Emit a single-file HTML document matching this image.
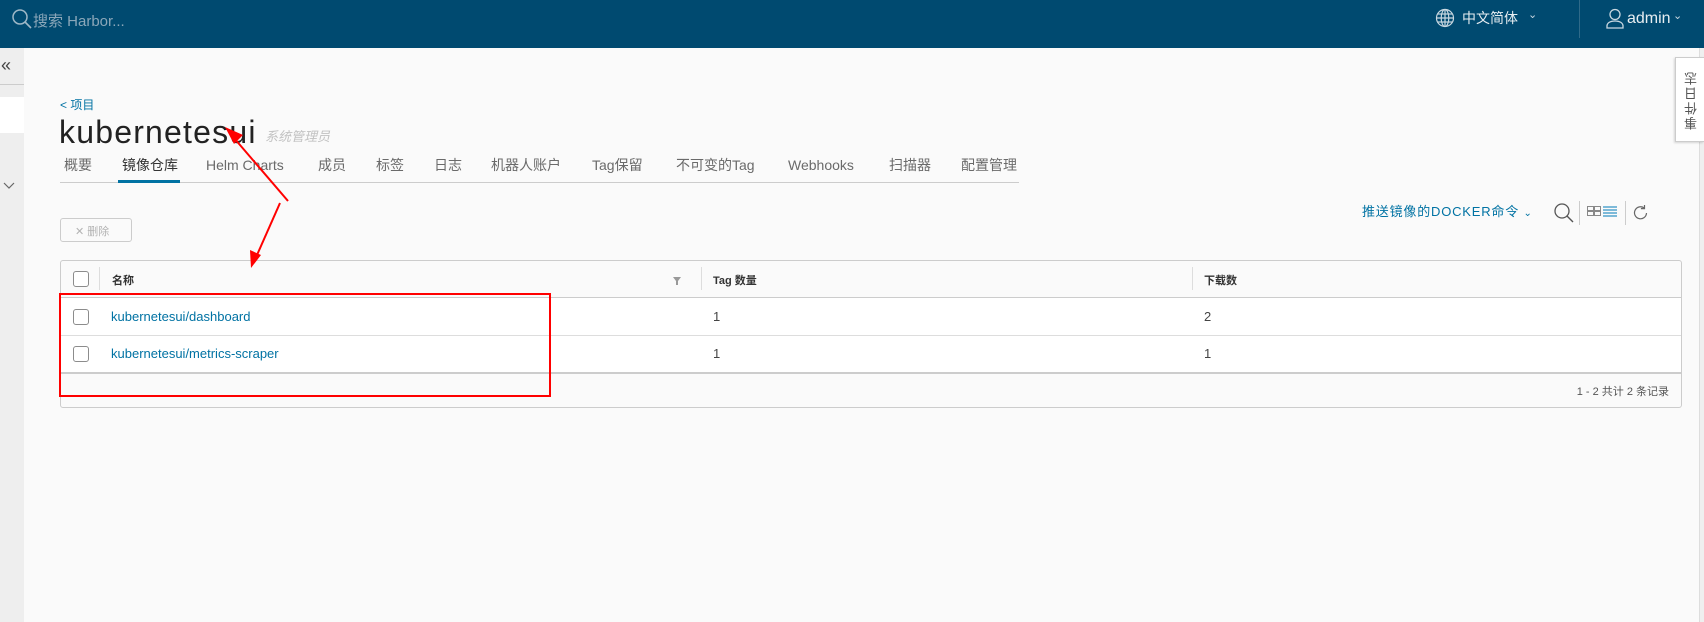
<!DOCTYPE html>
<html><head><meta charset="utf-8"><style>
*{box-sizing:border-box;margin:0;padding:0}
body{width:1704px;height:622px;overflow:hidden;background:#fafafa;font-family:"Liberation Sans","Noto Sans CJK SC",sans-serif;position:relative;color:#565656}
.a{position:absolute;white-space:nowrap}
.hdr{position:absolute;left:0;top:0;width:1704px;height:48px;background:#004a70}
.side{position:absolute;left:0;top:48px;width:24px;height:574px;background:#eeeeee}
.tab{position:absolute;top:156px;font-size:14px;line-height:18px;height:18px;color:#6a6a6a}
.cb{position:absolute;width:16px;height:16px;border:1px solid #8c8c8c;border-radius:3px;background:#fff}
.lnk{color:#0072a3;font-size:13px}
</style></head><body>
<div class="hdr"></div>
<svg class="a" style="left:11px;top:8px" width="22" height="22" viewBox="0 0 22 22"><circle cx="9" cy="9" r="7" fill="none" stroke="#9fb8c7" stroke-width="1.5"/><line x1="14" y1="14" x2="20" y2="20" stroke="#9fb8c7" stroke-width="1.6"/></svg>
<div class="a" style="left:33px;top:10px;font-size:15px;color:#8ba7b9">搜索 Harbor...</div>
<svg class="a" style="left:1435px;top:8px" width="20" height="20" viewBox="0 0 20 20" fill="none" stroke="#c9d8e1" stroke-width="1.2"><circle cx="10" cy="10" r="8.5"/><ellipse cx="10" cy="10" rx="3.8" ry="8.5"/><line x1="1.5" y1="10" x2="18.5" y2="10"/><line x1="3" y1="6" x2="17" y2="6"/><line x1="3" y1="14" x2="17" y2="14"/><line x1="10" y1="1.5" x2="10" y2="18.5"/></svg>
<div class="a" style="left:1462px;top:8px;font-size:14px;line-height:20px;color:#e6edf1">中文简体</div>
<div class="a" style="left:1528px;top:8px;font-size:11px;color:#c9d8e1">⌄</div>
<div class="a" style="left:1579px;top:0;width:1px;height:38px;background:#2f6a89"></div>
<svg class="a" style="left:1606px;top:8px" width="18" height="22" viewBox="0 0 18 22" fill="none" stroke="#c9d8e1" stroke-width="1.3"><circle cx="9" cy="6.5" r="5"/><path d="M1 20v-2c0-3 3-5 8-5s8 2 8 5v2z"/></svg>
<div class="a" style="left:1627px;top:9px;font-size:16px;line-height:20px;color:#e6edf1">admin</div>
<div class="a" style="left:1673px;top:9px;font-size:11px;color:#c9d8e1">⌄</div>

<div class="side"></div>
<div class="a" style="left:1px;top:55px;font-size:18px;color:#444">«</div>
<div class="a" style="left:0;top:84px;width:24px;height:1px;background:#ccc"></div>
<div class="a" style="left:0;top:97px;width:24px;height:36px;background:#fff"></div>
<svg class="a" style="left:3px;top:182px" width="12" height="8" viewBox="0 0 12 8"><path d="M1 1l5 5 5-5" fill="none" stroke="#666" stroke-width="1.2"/></svg>

<div class="a" style="left:1699px;top:48px;width:5px;height:574px;background:#efefef;border-left:1px solid #ddd"></div>
<div class="a" style="left:1675px;top:57px;width:29px;height:85px;background:#fff;border:1px solid #ccc;border-right:none;box-shadow:-1px 1px 2px rgba(0,0,0,.15)"></div>
<div class="a" style="left:1682px;top:70px;font-size:13px;color:#555;writing-mode:vertical-rl;transform:rotate(180deg);letter-spacing:2px">事件日志</div>

<div class="a lnk" style="left:60px;top:98px;font-size:12px;line-height:14px">&lt; 项目</div>
<div class="a" style="left:59px;top:115px;font-size:32px;line-height:34px;color:#222;letter-spacing:1.2px">kubernetesui</div>
<div class="a" style="left:265px;top:126px;font-size:13px;color:#c2c2c2;font-style:italic">系统管理员</div>

<div class="tab" style="left:64px">概要</div>
<div class="tab" style="left:122px;color:#333">镜像仓库</div>
<div class="tab" style="left:206px">Helm Charts</div>
<div class="tab" style="left:318px">成员</div>
<div class="tab" style="left:376px">标签</div>
<div class="tab" style="left:434px">日志</div>
<div class="tab" style="left:491px">机器人账户</div>
<div class="tab" style="left:592px">Tag保留</div>
<div class="tab" style="left:676px">不可变的Tag</div>
<div class="tab" style="left:788px">Webhooks</div>
<div class="tab" style="left:889px">扫描器</div>
<div class="tab" style="left:961px">配置管理</div>
<div class="a" style="left:60px;top:182px;width:959px;height:1px;background:#ccc"></div>
<div class="a" style="left:118px;top:180px;width:62px;height:3px;background:#0072a3"></div>

<div class="a" style="left:1362px;top:203px;font-size:13px;line-height:18px;color:#0072a3;letter-spacing:0.8px">推送镜像的DOCKER命令 <span style="font-size:10px">⌄</span></div>
<svg class="a" style="left:1553px;top:202px" width="22" height="22" viewBox="0 0 22 22"><circle cx="9" cy="9" r="7" fill="none" stroke="#555" stroke-width="1.3"/><line x1="14" y1="14" x2="20" y2="20" stroke="#555" stroke-width="1.4"/></svg>
<div class="a" style="left:1579px;top:201px;width:1px;height:24px;background:#ccc"></div>
<svg class="a" style="left:1587px;top:205px" width="32" height="12" viewBox="0 0 32 12" fill="none" stroke-width="1"><rect x="0.5" y="1.5" width="6" height="4" stroke="#888"/><rect x="7.5" y="1.5" width="6" height="4" stroke="#888"/><rect x="0.5" y="6.5" width="6" height="4" stroke="#888"/><rect x="7.5" y="6.5" width="6" height="4" stroke="#888"/><path d="M16 2h14M16 5h14M16 8h14M16 11h14" stroke="#0079b8"/></svg>
<div class="a" style="left:1625px;top:201px;width:1px;height:24px;background:#ccc"></div>
<svg class="a" style="left:1632px;top:204px" width="18" height="18" viewBox="0 0 18 18" fill="none" stroke="#666" stroke-width="1.2"><path d="M14.5 9A6 6 0 1 1 12.5 4.3"/><path d="M12.5 1v3.6h-3.6"/></svg>

<div class="a" style="left:60px;top:218px;width:72px;height:24px;border:1px solid #ccc;border-radius:3px;font-size:11px;color:#b3b3b3;padding:4px 0 0 14px">✕ 删除</div>

<div class="a" style="left:60px;top:260px;width:1622px;height:148px;border:1px solid #ccc;border-radius:3px;background:#fafafa"></div>
<div class="a" style="left:61px;top:297px;width:1620px;height:76px;background:#fff;border-top:1px solid #ccc;border-bottom:1px solid #ccc"></div>
<div class="a" style="left:61px;top:335px;width:1620px;height:1px;background:#ddd"></div>
<div class="a" style="left:61px;top:372px;width:1620px;height:2px;background:#ccc"></div>
<div class="a" style="left:99px;top:267px;width:1px;height:23px;background:#ddd"></div>
<div class="a" style="left:701px;top:267px;width:1px;height:23px;background:#ddd"></div>
<div class="a" style="left:1192px;top:267px;width:1px;height:23px;background:#ddd"></div>
<div class="cb" style="left:73px;top:271px"></div>
<div class="cb" style="left:73px;top:309px"></div>
<div class="cb" style="left:73px;top:346px"></div>
<div class="a" style="left:112px;top:272px;font-size:11px;color:#333;font-weight:bold">名称</div>
<svg class="a" style="left:672px;top:276px" width="10" height="10" viewBox="0 0 10 10"><path d="M1 1h8L6 5v4H4V5z" fill="#999"/></svg>
<div class="a" style="left:713px;top:272px;font-size:11px;color:#333;font-weight:bold">Tag 数量</div>
<div class="a" style="left:1204px;top:272px;font-size:11px;color:#333;font-weight:bold">下载数</div>
<div class="a lnk" style="left:111px;top:309px">kubernetesui/dashboard</div>
<div class="a lnk" style="left:111px;top:346px">kubernetesui/metrics-scraper</div>
<div class="a" style="left:713px;top:309px;font-size:13px;color:#444">1</div>
<div class="a" style="left:713px;top:346px;font-size:13px;color:#444">1</div>
<div class="a" style="left:1204px;top:309px;font-size:13px;color:#444">2</div>
<div class="a" style="left:1204px;top:346px;font-size:13px;color:#444">1</div>
<div class="a" style="left:1560px;top:383px;width:109px;text-align:right;font-size:11px;color:#555">1 - 2 共计 2 条记录</div>

<div class="a" style="left:59px;top:293px;width:492px;height:104px;border:2px solid #f00"></div>
<svg class="a" style="left:0;top:0" width="600" height="300" viewBox="0 0 600 300">
<line x1="288" y1="201" x2="234" y2="138" stroke="#f00" stroke-width="2"/>
<path d="M225 127l18 8-9 9z" fill="#f00"/>
<line x1="280" y1="203" x2="257" y2="255" stroke="#f00" stroke-width="2"/>
<path d="M251 268l-1-18 11 5z" fill="#f00"/>
</svg>
</body></html>
